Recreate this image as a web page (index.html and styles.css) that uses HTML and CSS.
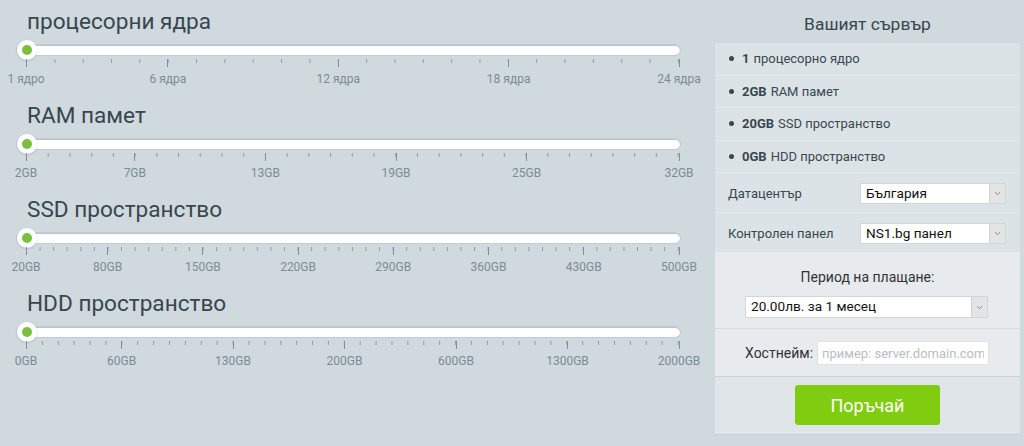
FILE: index.html
```html
<!DOCTYPE html>
<html lang="bg">
<head>
<meta charset="utf-8">
<title>Конфигуратор</title>
<link rel="stylesheet" href="styles.css">
</head>
<body>
<div class="page">
  <main class="sliders">
    <section class="param">
      <h3 class="param-title">процесорни ядра</h3>
      <div class="slider">
        <div class="track"><span class="handle"><span class="dot"></span></span></div>
        <div class="scale" style="--step:28.348px">
          <span class="major" style="left:0%"></span>
          <span class="major" style="left:21.739%"></span>
          <span class="major" style="left:47.826%"></span>
          <span class="major" style="left:73.913%"></span>
          <span class="major" style="left:100%"></span>
        </div>
        <div class="labels">
          <span style="left:0%">1 ядро</span>
          <span style="left:21.739%">6 ядра</span>
          <span style="left:47.826%">12 ядра</span>
          <span style="left:73.913%">18 ядра</span>
          <span style="left:100%">24 ядра</span>
        </div>
      </div>
    </section>
    <section class="param">
      <h3 class="param-title">RAM памет</h3>
      <div class="slider">
        <div class="track"><span class="handle"><span class="dot"></span></span></div>
        <div class="scale" style="--step:21.733px">
          <span class="major" style="left:0%"></span>
          <span class="major" style="left:16.667%"></span>
          <span class="major" style="left:36.667%"></span>
          <span class="major" style="left:56.667%"></span>
          <span class="major" style="left:76.667%"></span>
          <span class="major" style="left:100%"></span>
        </div>
        <div class="labels">
          <span style="left:0%">2GB</span>
          <span style="left:16.667%">7GB</span>
          <span style="left:36.667%">13GB</span>
          <span style="left:56.667%">19GB</span>
          <span style="left:76.667%">25GB</span>
          <span style="left:100%">32GB</span>
        </div>
      </div>
    </section>
    <section class="param">
      <h3 class="param-title">SSD пространство</h3>
      <div class="slider">
        <div class="track"><span class="handle"><span class="dot"></span></span></div>
        <div class="scale" style="--step:13.583px">
          <span class="major" style="left:0%"></span>
          <span class="major" style="left:12.5%"></span>
          <span class="major" style="left:27.083%"></span>
          <span class="major" style="left:41.667%"></span>
          <span class="major" style="left:56.25%"></span>
          <span class="major" style="left:70.833%"></span>
          <span class="major" style="left:85.417%"></span>
          <span class="major" style="left:100%"></span>
        </div>
        <div class="labels">
          <span style="left:0%">20GB</span>
          <span style="left:12.5%">80GB</span>
          <span style="left:27.083%">150GB</span>
          <span style="left:41.667%">220GB</span>
          <span style="left:56.25%">290GB</span>
          <span style="left:70.833%">360GB</span>
          <span style="left:85.417%">430GB</span>
          <span style="left:100%">500GB</span>
        </div>
      </div>
    </section>
    <section class="param">
      <h3 class="param-title">HDD пространство</h3>
      <div class="slider">
        <div class="track"><span class="handle"><span class="dot"></span></span></div>
        <div class="scale" style="--step:15.902px">
          <span class="major" style="left:0%"></span>
          <span class="major" style="left:14.634%"></span>
          <span class="major" style="left:31.707%"></span>
          <span class="major" style="left:48.78%"></span>
          <span class="major" style="left:65.854%"></span>
          <span class="major" style="left:82.927%"></span>
          <span class="major" style="left:100%"></span>
        </div>
        <div class="labels">
          <span style="left:0%">0GB</span>
          <span style="left:14.634%">60GB</span>
          <span style="left:31.707%">130GB</span>
          <span style="left:48.78%">200GB</span>
          <span style="left:65.854%">600GB</span>
          <span style="left:82.927%">1300GB</span>
          <span style="left:100%">2000GB</span>
        </div>
      </div>
    </section>
  </main>

  <aside class="summary">
    <h2 class="summary-title">Вашият сървър</h2>
    <div class="panel">
      <ul class="specs">
        <li><b>1</b> процесорно ядро</li>
        <li><b>2GB</b> RAM памет</li>
        <li><b>20GB</b> SSD пространство</li>
        <li><b>0GB</b> HDD пространство</li>
      </ul>
      <div class="opt-row">
        <span class="opt-label">Датацентър</span>
        <div class="select sel-small"><span class="sel-text">България</span><span class="arrow"><svg width="7" height="5" viewBox="0 0 7 5"><path d="M1 1.2 L3.5 3.6 L6 1.2" fill="none" stroke="#888" stroke-width="1"/></svg></span></div>
      </div>
      <div class="opt-row">
        <span class="opt-label">Контролен панел</span>
        <div class="select sel-small"><span class="sel-text">NS1.bg панел</span><span class="arrow"><svg width="7" height="5" viewBox="0 0 7 5"><path d="M1 1.2 L3.5 3.6 L6 1.2" fill="none" stroke="#888" stroke-width="1"/></svg></span></div>
      </div>
      <div class="period">
        <div class="period-label">Период на плащане:</div>
        <div class="select sel-wide"><span class="sel-text">20.00лв. за 1 месец</span><span class="arrow"><svg width="7" height="5" viewBox="0 0 7 5"><path d="M1 1.2 L3.5 3.6 L6 1.2" fill="none" stroke="#888" stroke-width="1"/></svg></span></div>
      </div>
      <div class="host">
        <span class="host-label">Хостнейм:</span>
        <input class="host-input" type="text" placeholder="пример: server.domain.com">
      </div>
      <div class="order">
        <button class="order-btn" type="button">Поръчай</button>
      </div>
    </div>
  </aside>
</div>
</body>
</html>
```

FILE: styles.css
```css
* { box-sizing: border-box; }

html, body {
  margin: 0;
  padding: 0;
}

body {
  background: #d0d9de;
  font-family: Roboto, "Liberation Sans", Arial, sans-serif;
  color: #37474f;
  width: 1024px;
  height: 446px;
  overflow: hidden;
}

.page {
  display: flex;
  align-items: flex-start;
}

/* ---------- sliders ---------- */
.sliders {
  width: 715px;
  flex: none;
}

.param {
  padding: 9px 0 8px 0;
}

.param-title {
  margin: 0 0 10px 27px;
  font-size: 22.6px;
  line-height: 26px;
  font-weight: 400;
  color: #37474f;
}

.slider {
  position: relative;
  margin-left: 17px;
  width: 663px;
}

.track {
  position: relative;
  height: 10px;
  background: #fff;
  border-radius: 5px;
  box-shadow: inset 0 1px 0 #b9c5cc, 0 0 0 1px rgba(150, 168, 178, 0.25);
}

.handle {
  position: absolute;
  left: 0;
  top: -5px;
  width: 20px;
  height: 20px;
  border-radius: 50%;
  background: #fff;
  box-shadow: 0 1px 2px rgba(80, 100, 110, 0.25);
  display: flex;
  align-items: center;
  justify-content: center;
}

.dot {
  width: 10px;
  height: 10px;
  border-radius: 50%;
  background: #7cbf3f;
}

.scale {
  position: relative;
  margin: 4px 0 0 9px;
  width: 653px;
  height: 8px;
  background-image: repeating-linear-gradient(to right, #8e9ea6 0, #8e9ea6 1px, transparent 1px, transparent 100%);
  background-size: var(--step) 4px;
  background-repeat: repeat-x;
  background-position: 0 0;
}

.major {
  position: absolute;
  top: 0;
  width: 1px;
  height: 8px;
  margin-left: -0.5px;
  background: #7f9099;
}

.labels {
  position: relative;
  margin: 5px 0 0 9px;
  width: 653px;
  height: 14px;
}

.labels span {
  position: absolute;
  top: 0;
  transform: translateX(-50%);
  font-size: 12px;
  line-height: 14px;
  color: #7a8c96;
  white-space: nowrap;
}

/* ---------- summary ---------- */
.summary {
  width: 305px;
  flex: none;
}

.summary-title {
  margin: 0;
  padding: 13px 0 8px;
  height: 43px;
  font-size: 17.4px;
  line-height: 22px;
  font-weight: 400;
  text-align: center;
  color: #37474f;
}

.panel {
  background: #dce3e7;
  border-bottom: 1px solid #c6d0d5;
}

.specs {
  list-style: none;
  margin: 0;
  padding: 0;
}

.specs li {
  height: 32.5px;
  line-height: 31.5px;
  border-bottom: 1px solid #e2e8eb;
  padding-left: 14px;
  font-size: 13px;
  color: #37474f;
  display: flex;
  align-items: center;
}

.specs li::before {
  content: "";
  width: 5px;
  height: 5px;
  border-radius: 50%;
  background: #37474f;
  margin-right: 8px;
  flex: none;
}

.specs li b {
  font-weight: 700;
  margin-right: 4px;
}

.opt-row {
  display: flex;
  align-items: center;
  justify-content: space-between;
  padding: 10px 14px 8px 13px;
  border-bottom: 1px solid #e2e8eb;
}

.opt-label {
  font-size: 13px;
  color: #37474f;
}

.select {
  display: flex;
  align-items: stretch;
  background: #fff;
  border: 1px solid #d3d6d8;
  font-size: 13.6px;
  color: #111;
}

.sel-small {
  width: 146px;
  height: 21px;
}

.sel-wide {
  width: 243px;
  height: 22px;
  margin-left: 30px;
}

.sel-text {
  flex: 1;
  padding-left: 5px;
  line-height: 19px;
  white-space: nowrap;
  overflow: hidden;
}

.arrow {
  width: 16px;
  flex: none;
  background: #e4e4e4;
  border-left: 1px solid #cfcfcf;
  display: flex;
  align-items: center;
  justify-content: center;
}

.period {
  background: #e7ebee;
  padding: 14px 0 10px;
  border-top: 1px solid #e8ecef;
  border-bottom: 1px solid #d6dde1;
}

.period-label {
  text-align: center;
  font-size: 14px;
  line-height: 18px;
  color: #333;
  margin-bottom: 10px;
}

.host {
  background: #e7ebee;
  display: flex;
  align-items: center;
  padding: 12px 0 11px 30px;
  border-bottom: 1px solid #c8d1d6;
}

.host-label {
  font-size: 14px;
  color: #333;
  width: 72px;
}

.host-input {
  width: 172px;
  height: 24px;
  border: 1px solid #dfe2e4;
  background: #fff;
  padding: 0 4px;
  font-family: Roboto, "Liberation Sans", Arial, sans-serif;
  font-size: 13px;
  color: #333;
  outline: none;
}

.host-input::placeholder {
  color: #b9bec2;
}

.order {
  background: #dfe5e8;
  display: flex;
  justify-content: center;
  padding: 8px 0 9px;
}

.order-btn {
  width: 145px;
  height: 40px;
  border: none;
  border-radius: 3px;
  background: #80cc10;
  color: #fff;
  font-family: Roboto, "Liberation Sans", Arial, sans-serif;
  font-size: 18px;
  cursor: pointer;
}
```
